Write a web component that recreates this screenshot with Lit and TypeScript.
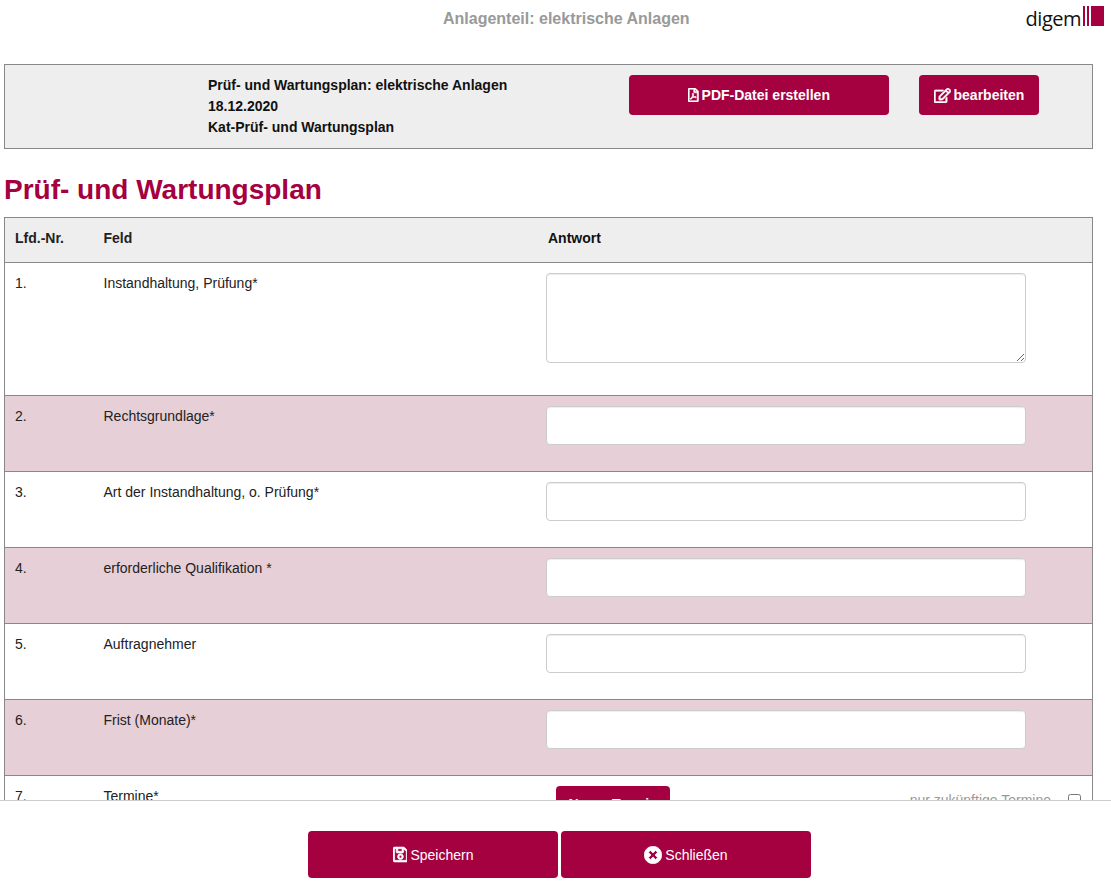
import { LitElement, html, css, svg } from "lit";
import { customElement } from "lit/decorators.js";

const icons = {
  pdf: { box: "0 0 384 512", d: "M369.9 97.9L286 14C277 5 264.8-.1 252.1-.1H48C21.5 0 0 21.5 0 48v416c0 26.5 21.5 48 48 48h288c26.5 0 48-21.5 48-48V131.9c0-12.7-5.1-25-14.1-34zM332.1 128H256V51.9l76.1 76.1zM48 464V48h160v104c0 13.3 10.7 24 24 24h104v288H48zm250.2-143.7c-12.2-12-47-8.7-64.4-6.5-17.2-10.5-28.7-25-36.8-46.3 3.9-16.1 10.1-40.6 5.4-56-4.2-26.2-37.8-23.6-42.6-5.9-4.4 16.1-.4 38.5 7 67.1-10 23.9-24.9 56-35.4 74.4-20 10.3-47 26.2-51 46.2-3.3 15.8 26 55.2 76.1-31.2 22.4-7.4 46.8-16.5 68.4-20.1 18.9 10.2 41 17 55.8 17 25.5 0 28-28.2 17.5-38.7zm-198.1 77.8c5.1-13.7 24.5-29.5 30.4-35-19 30.3-30.4 35.7-30.4 35zm81.6-190.6c7.4 0 6.7 32.1 1.8 40.8-4.4-13.9-4.3-40.8-1.8-40.8zm-24.4 136.6c9.7-16.9 18-37 24.7-54.7 8.3 15.1 18.9 27.2 30.1 35.5-20.8 4.3-38.9 13.1-54.8 19.2zm131.6-5s-5 6-37.3-7.8c35.1-2.6 40.9 5.4 37.3 7.8z" },
  edit: { box: "0 0 576 512", d: "M402.3 344.9l32-32c5-5 13.7-1.5 13.7 5.7V464c0 26.5-21.5 48-48 48H48c-26.5 0-48-21.5-48-48V112c0-26.5 21.5-48 48-48h273.5c7.1 0 10.7 8.6 5.7 13.7l-32 32c-1.5 1.5-3.5 2.3-5.7 2.3H48v352h352V350.5c0-2.1.8-4.1 2.3-5.6zm156.6-201.8L296.3 405.7l-90.4 10c-26.2 2.9-48.5-19.2-45.6-45.6l10-90.4L432.9 17.1c22.9-22.9 59.9-22.9 82.7 0l43.2 43.2c22.9 22.9 22.9 60 .1 82.8zM460.1 174L402 115.9 216.2 301.8l-7.3 65.3 65.3-7.3L460.1 174zm64.8-79.7l-43.2-43.2c-4.1-4.1-10.8-4.1-14.8 0L436 82l58.1 58.1 30.9-30.9c4-4.2 4-10.8-.1-14.9z" },
  save: { box: "0 0 448 512", d: "M433.941 129.941l-83.882-83.882A48 48 0 0 0 316.118 32H48C21.49 32 0 53.49 0 80v352c0 26.51 21.49 48 48 48h352c26.51 0 48-21.49 48-48V163.882a48 48 0 0 0-14.059-33.941zM272 80v80H144V80h128zm122 352H54a6 6 0 0 1-6-6V86a6 6 0 0 1 6-6h42v104c0 13.255 10.745 24 24 24h176c13.255 0 24-10.745 24-24V83.882l78.243 78.243a6 6 0 0 1 1.757 4.243V426a6 6 0 0 1-6 6zM224 232c-48.523 0-88 39.477-88 88s39.477 88 88 88 88-39.477 88-88-39.477-88-88-88zm0 128c-22.056 0-40-17.944-40-40s17.944-40 40-40 40 17.944 40 40-17.944 40-40 40z" },
  close: { box: "0 0 512 512", d: "M256 8C119 8 8 119 8 256s111 248 248 248 248-111 248-248S393 8 256 8zm121.6 313.1c4.7 4.7 4.7 12.3 0 17L338 377.6c-4.7 4.7-12.3 4.7-17 0L256 312l-65.1 65.6c-4.7 4.7-12.3 4.7-17 0L134.4 338c-4.7-4.7-4.7-12.3 0-17l65.6-65-65.6-65.1c-4.7-4.7-4.7-12.3 0-17l39.6-39.6c4.7-4.7 12.3-4.7 17 0l65 65.7 65.1-65.6c4.7-4.7 12.3-4.7 17 0l39.6 39.6c4.7 4.7 4.7 12.3 0 17L312 256l65.6 65.1z" },
};

const icon = (name: keyof typeof icons, h: number) => html`<svg
  height=${h}
  viewBox=${icons[name].box}
  fill="currentColor"
>${svg`<path d=${icons[name].d} stroke="currentColor" stroke-width="20"></path>`}</svg>`;

const fields = [
  { nr: "2.", label: "Rechtsgrundlage*" },
  { nr: "3.", label: "Art der Instandhaltung, o. Prüfung*" },
  { nr: "4.", label: "erforderliche Qualifikation *" },
  { nr: "5.", label: "Auftragnehmer" },
  { nr: "6.", label: "Frist (Monate)*" },
];

@customElement("app-root")
export class AppRoot extends LitElement {
  static styles = css`
    :host {
      display: flex;
      flex-direction: column;
      height: 890px;
      overflow: hidden;
      font-family: "Liberation Sans", Arial, sans-serif;
      font-size: 14px;
      color: #222;
      background: #fff;
    }
    .scroll {
      height: 800px;
      overflow: hidden;
      padding: 0 18px 0 4px;
      flex: none;
      box-sizing: border-box;
    }
    .top {
      height: 64px;
      display: flex;
      justify-content: space-between;
    }
    .top h1 {
      margin: 10px 0 0 439px;
      font-size: 16px;
      line-height: 18px;
      color: #999;
      font-weight: bold;
    }
    .logo {
      display: flex;
      align-items: flex-start;
      margin: 6px -11px 0 0;
    }
    .logo span {
      font-family: "Open Sans", sans-serif;
      font-size: 20px;
      line-height: 26px;
      margin: 0 2px 0 0;
      letter-spacing: -0.5px;
      color: #111;
    }
    .bars {
      display: flex;
      height: 20px;
    }
    .bars i {
      background: #a50040;
      display: block;
      width: 2px;
      margin-right: 1.5px;
    }
    .bars i:last-child {
      width: 13px;
      margin: 0 0 0 1px;
    }
    .info {
      height: 85px;
      box-sizing: border-box;
      border: 1px solid #888;
      background: #eee;
      display: flex;
      align-items: flex-start;
      padding: 10px 0 0 203px;
    }
    .info .text {
      width: 421px;
      font-weight: bold;
      font-size: 14px;
      line-height: 21px;
      color: #111;
    }
    .btn {
      display: flex;
      align-items: center;
      justify-content: center;
      gap: 3px;
      border: 0;
      padding: 0;
      border-radius: 4px;
      background: #a50040;
      color: #fff;
      font-family: inherit;
      font-size: 14px;
    }
    .info .btn {
      height: 40px;
      font-weight: bold;
    }
    .pdf {
      width: 260px;
      margin-right: 30px;
    }
    .edit {
      width: 120px;
    }
    h2 {
      margin: 25px 0 11px;
      font-size: 28px;
      line-height: 32px;
      color: #a50040;
    }
    .table {
      border: 1px solid #888;
      border-bottom: 0;
      font-size: 14px;
    }
    .row {
      display: grid;
      grid-template-columns: 98.5px 441.5px 1fr;
      border-bottom: 1px solid #888;
      padding: 10px 0 26px;
    }
    .row:nth-child(odd) {
      background: #e7cfd7;
    }
    .row.head {
      background: #eee;
      font-weight: bold;
      padding: 0 0 5px;
      box-sizing: border-box;
      align-items: center;
      height: 45px;
      color: #111;
    }
    .row.first {
      padding-bottom: 32px;
    }
    .row > div {
      line-height: 20px;
      color: #222;
    }
    .nr {
      padding-left: 10px;
    }
    .answer {
      padding-left: 1px;
    }
    .head .answer {
      padding-left: 3px;
      color: #111;
    }
    input[type="text"],
    textarea {
      display: block;
      width: 480px;
      box-sizing: border-box;
      margin: 0;
      border: 1px solid #ccc;
      border-radius: 4px;
      background: #fff;
      box-shadow: inset 0 1px 1px rgba(0, 0, 0, 0.075);
    }
    input[type="text"] {
      height: 39px;
    }
    textarea {
      height: 90px;
    }
    .termine {
      display: flex;
      align-items: flex-start;
      padding-left: 11px;
      width: 536px;
      box-sizing: border-box;
    }
    .new {
      width: 114px;
      height: 35px;
      font-weight: bold;
    }
    .future {
      margin: 4px 0 0 auto;
      color: #999;
      font-size: 14px;
      display: flex;
      align-items: flex-start;
    }
    .future input {
      width: 13px;
      height: 13px;
      margin: 4px 0 0 17px;
    }
    footer {
      height: 90px;
      box-sizing: border-box;
      border-top: 1px solid #ccc;
      display: flex;
      justify-content: center;
      gap: 3px;
      padding: 30px 0 0 8px;
    }
    footer .btn {
      width: 250px;
      height: 47px;
    }
  `;

  render() {
    return html`
      <div class="scroll">
        <div class="top">
          <h1>Anlagenteil: elektrische Anlagen</h1>
          <div class="logo">
            <span>digem</span>
            <div class="bars"><i></i><i></i><i></i></div>
          </div>
        </div>
        <div class="info">
          <div class="text">
            Prüf- und Wartungsplan: elektrische Anlagen<br />
            18.12.2020<br />
            Kat-Prüf- und Wartungsplan
          </div>
          <button class="btn pdf">${icon("pdf", 14)} PDF-Datei erstellen</button>
          <button class="btn edit">${icon("edit", 15)} bearbeiten</button>
        </div>
        <h2>Prüf- und Wartungsplan</h2>
        <div class="table">
          <div class="row head">
            <div class="nr">Lfd.-Nr.</div>
            <div>Feld</div>
            <div class="answer">Antwort</div>
          </div>
          <div class="row first">
            <div class="nr">1.</div>
            <div>Instandhaltung, Prüfung*</div>
            <div class="answer"><textarea></textarea></div>
          </div>
          ${fields.map(
            (f) => html`
              <div class="row">
                <div class="nr">${f.nr}</div>
                <div>${f.label}</div>
                <div class="answer"><input type="text" /></div>
              </div>
            `
          )}
          <div class="row last">
            <div class="nr">7.</div>
            <div>Termine*</div>
            <div class="termine">
              <button class="btn new">Neuer Termin</button>
              <label class="future">nur zukünftige Termine<input type="checkbox" /></label>
            </div>
          </div>
        </div>
      </div>
      <footer>
        <button class="btn">${icon("save", 17)} Speichern</button>
        <button class="btn">${icon("close", 18)} Schließen</button>
      </footer>
    `;
  }
}
